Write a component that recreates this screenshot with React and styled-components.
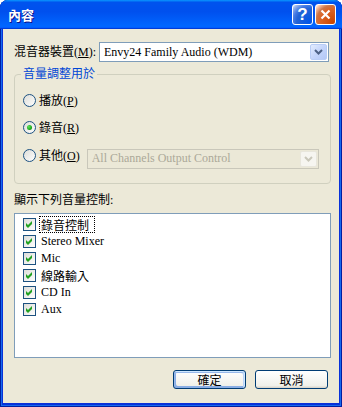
import React from "react";
import styled, { createGlobalStyle, css } from "styled-components";

const GlobalStyle = createGlobalStyle`
  html, body { margin: 0; padding: 0; background: #ffffff; }
  body {
    font-family: "Liberation Serif", "Noto Sans CJK TC", serif;
    font-size: 12px;
    color: #000;
  }
  * { box-sizing: border-box; }
`;

const Window = styled.div`
  width: 342px;
  height: 407px;
  display: flex;
  flex-direction: column;
  border-radius: 8px 8px 0 0;
  overflow: hidden;
  background: #0831d9;
  box-shadow: inset 1px 0 #001ea0, inset -1px 0 #001ea0, inset 0 -1px #001ea0,
    inset 2px 0 #166aee, inset -2px 0 #166aee, inset 0 -2px #166aee;
`;

const TitleBar = styled.div`
  height: 29px;
  flex: none;
  display: flex;
  align-items: center;
  gap: 2px;
  padding: 0 6px 0 8px;
  background: linear-gradient(
    180deg,
    #0997ff 0%,
    #0053ee 8%,
    #0050ee 40%,
    #0066ff 88%,
    #0066ff 93%,
    #005bff 95%,
    #003dd7 96%,
    #003dd7 100%
  );
`;

const Title = styled.div`
  flex: 1;
  font-family: "Noto Sans CJK TC", sans-serif;
  font-weight: 700;
  font-size: 13px;
  line-height: 15px;
  color: #fff;
  text-shadow: 1px 1px #0f1089;
  letter-spacing: 0;
`;

const CaptionButton = styled.div`
  width: 21px;
  height: 21px;
  border: 1px solid #fff;
  border-radius: 3px;
  display: flex;
  align-items: center;
  justify-content: center;
  color: #fff;
  font-family: "Liberation Sans", sans-serif;
  font-weight: 700;
  font-size: 17px;
  line-height: 1;
  ${(p) =>
    p.$kind === "close"
      ? css`
          background: radial-gradient(
            circle at 90% 90%,
            #cc4600 0%,
            #dc6527 55%,
            #cd7546 70%,
            #ffccb2 90%,
            #fff 100%
          );
        `
      : css`
          background: radial-gradient(
            circle at 90% 90%,
            #0054e9 0%,
            #2263d5 55%,
            #4479e4 70%,
            #a3bbec 90%,
            #fff 100%
          );
        `}
`;

const Client = styled.div`
  flex: 1;
  margin: 0 3px 4px 3px;
  background: #ece9d8;
  display: flex;
  flex-direction: column;
  padding: 13px 8px 0 11px;
`;

const DeviceRow = styled.div`
  display: flex;
  align-items: center;
  height: 20px;
  padding-right: 2px;
`;

const FieldLabel = styled.span`
  width: 85px;
  flex: none;
  white-space: nowrap;
  line-height: 14px;
`;

const Combo = styled.div`
  flex: 1;
  height: 20px;
  display: flex;
  align-items: center;
  padding-left: 4px;
  border: 1px solid ${(p) => (p.$disabled ? "#c9c7ba" : "#7f9db9")};
  background: ${(p) => (p.$disabled ? "#ebe8d7" : "#fff")};
  color: ${(p) => (p.$disabled ? "#aca899" : "#000")};
  ${(p) =>
    p.$offset &&
    css`
      margin-top: 6px;
      margin-left: 7px;
    `}
`;

const ComboText = styled.span`
  flex: 1;
  white-space: nowrap;
  overflow: hidden;
`;

const DropButton = styled.div`
  width: 17px;
  height: 16px;
  margin: 1px;
  border-radius: 2px;
  display: flex;
  align-items: center;
  justify-content: center;
  ${(p) =>
    p.$disabled
      ? css`
          background: #f6f5f0;
          border: 1px solid #e8e6dc;
        `
      : css`
          background: linear-gradient(135deg, #e3ecfe 0%, #c4d5fb 50%, #b4c8f6 100%);
          border: 1px solid #b9cdf6;
        `}
`;

const Group = styled.div`
  position: relative;
  margin-top: 12px;
  height: 110px;
  border: 1px solid #d0d0bf;
  border-radius: 4px;
  padding: 17px 11px 0 8px;
  display: flex;
  flex-direction: column;
`;

const Legend = styled.span`
  position: absolute;
  top: -8px;
  left: 6px;
  padding: 0 2px;
  background: #ece9d8;
  color: #0046d5;
  line-height: 14px;
  white-space: nowrap;
`;

const RadioRow = styled.div`
  display: flex;
  align-items: center;
  height: 17px;
  margin-top: ${(p) => p.$gap || 0}px;
`;

const ChoiceText = styled.span`
  margin-left: 3px;
  white-space: nowrap;
  line-height: 14px;
`;

const ListLabel = styled.div`
  margin-top: 9px;
  line-height: 14px;
  white-space: nowrap;
`;

const ListBox = styled.div`
  margin-top: 6px;
  height: 145px;
  border: 1px solid #7f9db9;
  background: #fff;
  padding: 2px 0 0 8px;
  display: flex;
  flex-direction: column;
`;

const ListItem = styled.div`
  height: 17px;
  display: flex;
  align-items: center;
`;

const ItemText = styled.span`
  margin-left: 3px;
  height: 17px;
  padding: 0 5px 0 1px;
  display: flex;
  align-items: center;
  white-space: nowrap;
  border: 1px ${(p) => (p.$focused ? "dotted #000" : "solid transparent")};
`;

const ButtonRow = styled.div`
  margin-top: 12px;
  display: flex;
  justify-content: flex-end;
  gap: 9px;
  padding-right: 3px;
`;

const PushButton = styled.div`
  width: 73px;
  height: 19px;
  border: 1px solid #003c74;
  border-radius: 3px;
  display: flex;
  align-items: center;
  justify-content: center;
  background: linear-gradient(180deg, #ffffff 0%, #f0f0ea 86%, #d6d0c5 100%);
  font-family: "Noto Sans CJK TC", sans-serif;
  font-size: 12px;
  ${(p) =>
    p.$default &&
    css`
      box-shadow: inset -1px 1px #cee7ff, inset 1px 2px #98b8ea,
        inset -2px 2px #bcd4f6, inset 1px -1px #89ade4, inset 2px -2px #89ade4;
    `}
`;

const Defs = () => (
  <svg width="0" height="0" style={{ position: "absolute" }}>
    <defs>
      <linearGradient id="xpBox" x1="0" y1="0" x2="1" y2="1">
        <stop offset="0" stopColor="#dcdcd7" />
        <stop offset="1" stopColor="#ffffff" />
      </linearGradient>
      <radialGradient id="xpDot" cx="0.35" cy="0.35" r="0.7">
        <stop offset="0" stopColor="#5ee35a" />
        <stop offset="1" stopColor="#0b9a0b" />
      </radialGradient>
    </defs>
  </svg>
);

const Chevron = ({ color }) => (
  <svg width="9" height="6" viewBox="0 0 9 6">
    <path d="M1 1 L4.5 4.5 L8 1" fill="none" stroke={color} strokeWidth="2" />
  </svg>
);

const Radio = ({ checked }) => (
  <svg width="13" height="13" viewBox="0 0 13 13" style={{ flex: "none" }}>
    <circle cx="6.5" cy="6.5" r="6" fill="url(#xpBox)" stroke="#1c5180" />
    {checked && <circle cx="6.5" cy="6.5" r="2.5" fill="url(#xpDot)" />}
  </svg>
);

const Check = () => (
  <svg width="13" height="13" viewBox="0 0 13 13" style={{ flex: "none" }}>
    <rect x="0.5" y="0.5" width="12" height="12" fill="url(#xpBox)" stroke="#1c5180" />
    <polygon points="3,5 5,7 9,3 9,6 5,10 3,8" fill="#21a121" />
  </svg>
);

const CloseGlyph = () => (
  <svg width="11" height="11" viewBox="0 0 11 11">
    <path d="M1.5 1.5 L9.5 9.5 M9.5 1.5 L1.5 9.5" stroke="#fff" strokeWidth="2.2" />
  </svg>
);

const Mn = ({ children }) => <u>{children}</u>;

const items = ["錄音控制", "Stereo Mixer", "Mic", "線路輸入", "CD In", "Aux"];

export default function App() {
  return (
    <>
      <GlobalStyle />
      <Defs />
      <Window>
        <TitleBar>
          <Title>內容</Title>
          <CaptionButton $kind="help">?</CaptionButton>
          <CaptionButton $kind="close">
            <CloseGlyph />
          </CaptionButton>
        </TitleBar>
        <Client>
          <DeviceRow>
            <FieldLabel>
              混音器裝置(<Mn>M</Mn>):
            </FieldLabel>
            <Combo>
              <ComboText>Envy24 Family Audio (WDM)</ComboText>
              <DropButton>
                <Chevron color="#4d6185" />
              </DropButton>
            </Combo>
          </DeviceRow>

          <Group>
            <Legend>音量調整用於</Legend>
            <RadioRow>
              <Radio />
              <ChoiceText>
                播放(<Mn>P</Mn>)
              </ChoiceText>
            </RadioRow>
            <RadioRow $gap={10}>
              <Radio checked />
              <ChoiceText>
                錄音(<Mn>R</Mn>)
              </ChoiceText>
            </RadioRow>
            <RadioRow $gap={11}>
              <Radio />
              <ChoiceText>
                其他(<Mn>O</Mn>)
              </ChoiceText>
              <Combo $disabled $offset>
                <ComboText>All Channels Output Control</ComboText>
                <DropButton $disabled>
                  <Chevron color="#c9c7ba" />
                </DropButton>
              </Combo>
            </RadioRow>
          </Group>

          <ListLabel>顯示下列音量控制:</ListLabel>
          <ListBox>
            {items.map((t, i) => (
              <ListItem key={t}>
                <Check />
                <ItemText $focused={i === 0}>{t}</ItemText>
              </ListItem>
            ))}
          </ListBox>

          <ButtonRow>
            <PushButton $default>確定</PushButton>
            <PushButton>取消</PushButton>
          </ButtonRow>
        </Client>
      </Window>
    </>
  );
}
